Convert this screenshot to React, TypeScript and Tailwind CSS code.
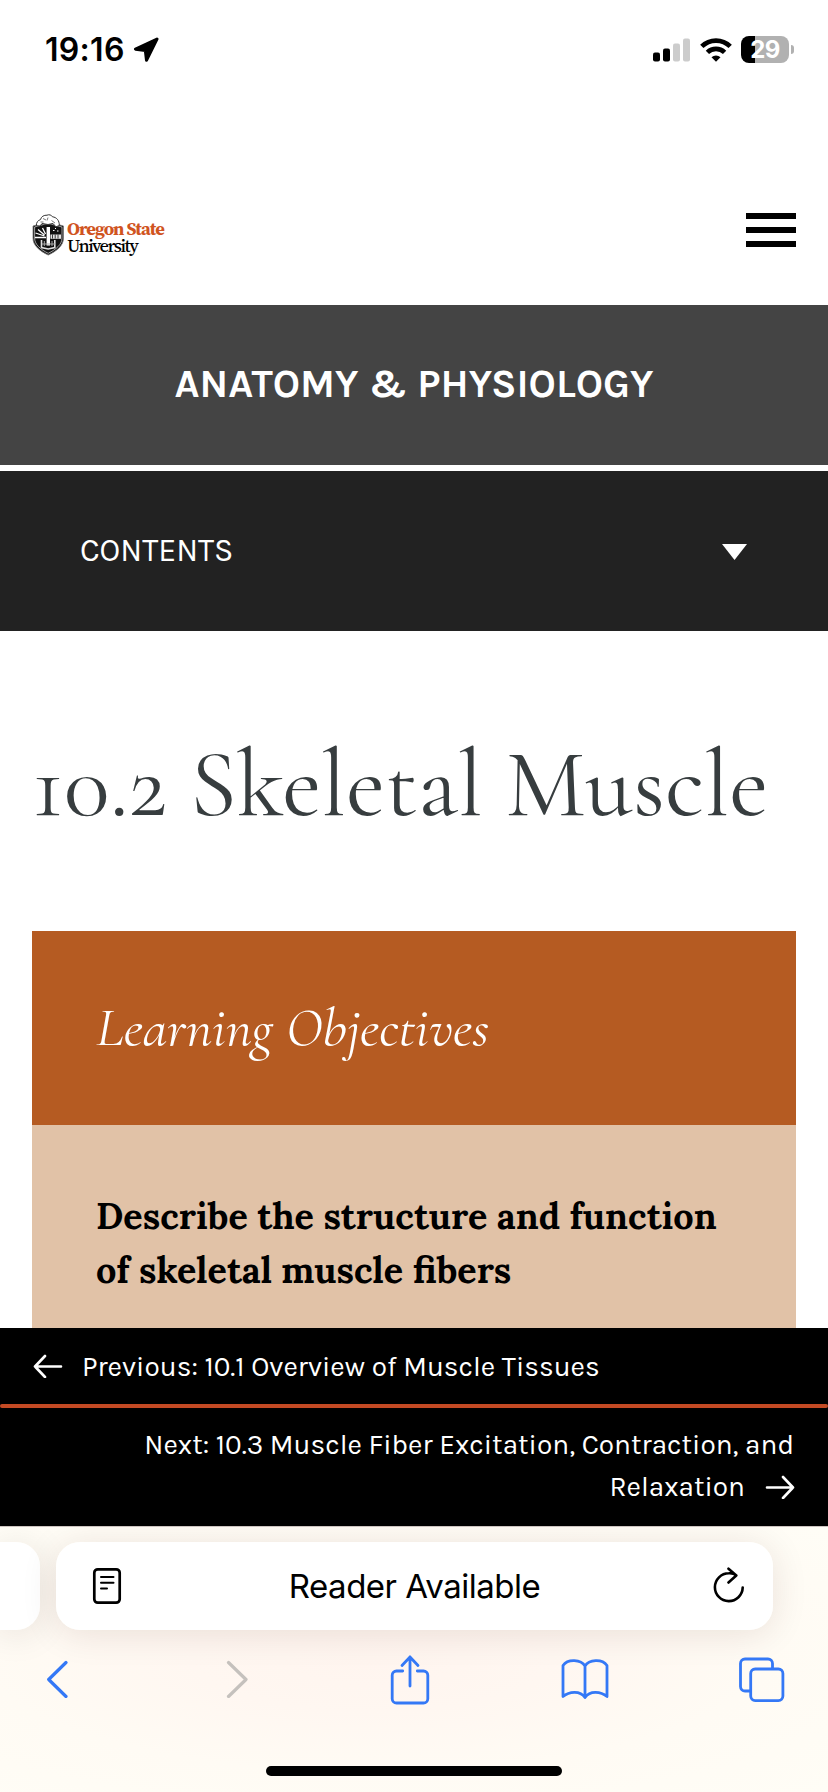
function StatusBar() {
  return (
    <div className="flex h-[99px] items-center justify-between pl-[45px] pr-[34px] font-['Inter',sans-serif]">
      <div className="flex items-center">
        <span className="text-[32px] font-semibold leading-none tracking-[0.3px]">19:16</span>
        <svg className="ml-[8px]" width="26" height="26" viewBox="0 0 26 26">
          <path d="M24 2 2.5 12.2 12.3 13.4 13.5 23.3Z" fill="#000" stroke="#000" strokeWidth="3" strokeLinejoin="round" />
        </svg>
      </div>
      <div className="flex items-center">
        <svg width="38" height="24" viewBox="0 0 38 24">
          <rect x="0" y="14.5" width="7" height="9" rx="2" fill="#000" />
          <rect x="10" y="10.5" width="7" height="13" rx="2" fill="#000" />
          <rect x="20" y="5.5" width="7" height="18" rx="2" fill="#ccc" />
          <rect x="30" y=".5" width="7" height="23" rx="2" fill="#ccc" />
        </svg>
        <svg className="ml-[9px]" width="32" height="24" viewBox="0 0 32 24">
          <path d="M1.8 8.4a20.2 20.2 0 0 1 28.4 0" fill="none" stroke="#000" strokeWidth="4.7" />
          <path d="M7.4 14.4a12.3 12.3 0 0 1 17.2 0" fill="none" stroke="#000" strokeWidth="4.7" />
          <path d="M11.5 19.3a6.6 6.6 0 0 1 9 0L16 23.8Z" fill="#000" />
        </svg>
        <div className="ml-[9px] flex h-[27px] w-[48px] items-center justify-center rounded-[8px] bg-[linear-gradient(to_right,#000_0,#000_14px,#b1b1b1_14px)] text-[24px] font-bold leading-none tracking-[-0.5px] text-white">
          29
        </div>
        <div className="ml-[2px] h-[9px] w-[3px] rounded-r-full bg-[#b1b1b1]" />
      </div>
    </div>
  );
}

function Crest() {
  return (
    <svg width="33" height="42" viewBox="0 0 33 42">
      <path d="M1 12 16 7.500 31.500 12V24C31.500 31.500 25 37 16.200 41 7.500 37 1 31.500 1 24Z" fill="#111" stroke="#777" strokeWidth=".8" />
      <path d="M2.600 13 16 9.200 30 13V24C30 30.500 24 35.500 16.200 39.300 8.600 35.500 2.600 30.500 2.600 24Z" fill="none" stroke="#ddd" strokeWidth=".7" />
      <path d="M3 23.500h11M3.500 19l9 3M6 15.500l6.500 5.500M10.500 14l3 6" stroke="#fff" strokeWidth="1.300" />
      <path d="M14.600 13h3.400v18.500h-3.400z" fill="#fff" />
      <path d="M18.500 20.500h10.500v4.300H18.500z" fill="#e5e5e5" />
      <path d="M20.500 20.500v4M23.200 20.500v4M26 20.500v4" stroke="#111" strokeWidth=".8" />
      <path d="M21 16.500h1.500M25 17h1.500M23 14.500h1" stroke="#fff" strokeWidth="1" />
      <path d="M9.500 26v7.500l6.700 1.500 6.600-1.500V26" fill="none" stroke="#ddd" strokeWidth="1.600" />
      <path d="M12.300 27v5M20 27v5M10 30h13" stroke="#aaa" strokeWidth="1" />
      <path d="M4.500 11.800C4 8.500 6 6.300 8.500 5.600 9.200 2.500 12 1 15 1.200 17 .200 19.500 1 20.500 2.800 24.500 3.200 27.500 6.500 27.300 11.500L24 12.800 21 9.500 16 10.500 10 9.500 8 12Z" fill="#fff" stroke="#333" strokeWidth="1" />
      <path d="M11 4.500 14 6M16 3.500 15 6.500M19.500 6.500 23 9M8.500 8h3" stroke="#555" strokeWidth=".8" />
    </svg>
  );
}

function SiteHeader() {
  return (
    <header className="flex h-[206px] items-start justify-between px-[32px] pt-[114px]">
      <a className="flex items-start pt-px">
        <Crest />
        <span className="ml-[2px] flex flex-col pt-[7px] font-['Source_Serif_4','Liberation_Serif',serif] text-[18.500px] leading-[16.500px]">
          <span className="font-bold tracking-[-1px] text-[#d0541f]">Oregon State</span>
          <span className="font-medium tracking-[-1.500px] text-black">University</span>
        </span>
      </a>
      <div className="flex w-[50px] flex-col gap-[8px]">
        <div className="h-[6px] bg-black" />
        <div className="h-[6px] bg-black" />
        <div className="h-[6px] bg-black" />
      </div>
    </header>
  );
}

function PageNav() {
  return (
    <nav className="h-[198px] bg-black font-['Karla','Inter',sans-serif] text-[28px] leading-[42px] text-white">
      <div className="flex h-[76px] items-center pl-[33px] pt-[2px]">
        <svg className="mb-[2px]" width="30" height="24" viewBox="0 0 30 24" fill="none" stroke="#fff" strokeWidth="2.600" strokeLinecap="round" strokeLinejoin="round">
          <path d="M28 12.500H2M12 2 2 12.500 12 23" />
        </svg>
        <span className="ml-[19px] whitespace-nowrap">Previous: 10.1 Overview of Muscle Tissues</span>
      </div>
      <div className="h-[4px] rounded-full bg-[#c44a24]" />
      <div className="flex flex-col items-end pr-[33px] pt-[16px]">
        <span className="whitespace-nowrap pr-px">Next: 10.3 Muscle Fiber Excitation, Contraction, and</span>
        <span className="flex items-center">
          Relaxation
          <svg className="ml-[20px]" width="30" height="24" viewBox="0 0 30 24" fill="none" stroke="#fff" strokeWidth="2.600" strokeLinecap="round" strokeLinejoin="round">
            <path d="M2 12.500h26M18 2l10 10.500L18 23" />
          </svg>
        </span>
      </div>
    </nav>
  );
}

function BrowserBar() {
  return (
    <footer className="h-[266px] overflow-hidden border-t border-[#cdc4c0] bg-[radial-gradient(ellipse_at_45%_50%,#fff5ef_0%,#fff7f1_28%,#fffbf4_60%,#fffdf6_100%)]">
      <div className="flex pt-[15px]">
        <div className="h-[88px] w-[40px] rounded-r-[24px] bg-white/95 shadow-[0_4px_36px_rgba(40,20,0,0.11)]" />
        <div className="ml-[16px] flex h-[88px] w-[717px] items-center justify-between rounded-[24px] bg-white/95 pl-[36px] pr-[28px] shadow-[0_4px_36px_rgba(60,20,0,0.11)]">
          <svg width="30" height="38" viewBox="0 0 30 38" fill="none" stroke="#000" strokeLinecap="round">
            <rect x="2.300" y="2.300" width="25.400" height="33.400" rx="3.500" strokeWidth="2.700" />
            <path d="M9 10h12.500M9 15.700h12.500M9 21.500h6" strokeWidth="2" />
          </svg>
          <span className="mr-[6px] font-['Inter',sans-serif] text-[33px] leading-none tracking-[-0.5px] text-black">Reader Available</span>
          <svg width="32" height="38" viewBox="0 0 32 38" fill="none" stroke="#000" strokeWidth="2.600" strokeLinecap="round" strokeLinejoin="round">
            <path d="M29.700 20.500A13.900 13.900 0 1 1 15.800 6.300C18.500 6.100 21 6.600 23.200 8.200M15.500 1.700 23.300 8.500 15.500 15.500" />
          </svg>
        </div>
      </div>
      <div className="mt-[24px] flex h-[50px] items-center pl-[45px] text-[#3478f6]">
        <svg width="25" height="38" viewBox="0 0 25 38" fill="none" stroke="currentColor" strokeWidth="3.200" strokeLinecap="round" strokeLinejoin="round">
          <path d="M21 2.500 3.700 19.500 21 36.500" />
        </svg>
        <svg className="ml-[155px] text-[#c5c1bd]" width="25" height="38" viewBox="0 0 25 38" fill="none" stroke="currentColor" strokeWidth="3.200" strokeLinecap="round" strokeLinejoin="round">
          <path d="M3.500 2.500 21 19.500 3.500 36.500" />
        </svg>
        <svg className="ml-[140px]" width="40" height="51" viewBox="0 0 40 51" fill="none" stroke="currentColor" strokeWidth="2.800" strokeLinecap="round" strokeLinejoin="round">
          <path d="M12.700 17H6.500a4.300 4.300 0 0 0-4.300 4.300v23.400A4.300 4.300 0 0 0 6.500 49h27a4.300 4.300 0 0 0 4.300-4.300V21.300A4.300 4.300 0 0 0 33.500 17h-6.200M20 32V3M12 11.500 20 3l8 8.500" />
        </svg>
        <svg className="ml-[130px]" width="50" height="44" viewBox="0 0 50 44" fill="none" stroke="currentColor" strokeWidth="2.800" strokeLinecap="round" strokeLinejoin="round">
          <path d="M25 9C21 2.500 8 1.500 3 8.500V39.500C9 34.500 20 33 25 40.500 30 33 41 34.500 47 39.500V8.500C42 1.500 29 2.500 25 9ZM25 9V40.500" />
        </svg>
        <svg className="ml-[128px]" width="47" height="47" viewBox="0 0 47 47" fill="none" stroke="currentColor" strokeWidth="2.800" strokeLinejoin="round">
          <rect x="12.700" y="13" width="32.200" height="31.600" rx="4.500" />
          <path d="M12.700 35H7A4.500 4.500 0 0 1 2.500 30.500V7.500A4.500 4.500 0 0 1 7 3H30A4.500 4.500 0 0 1 34.500 7.500V13" />
        </svg>
      </div>
      <div className="mx-auto mt-[62px] h-[10px] w-[296px] rounded-full bg-black" />
    </footer>
  );
}

export default function App() {
  return (
    <div className="flex h-[1792px] w-[828px] flex-col overflow-hidden bg-white text-black">
      <StatusBar />
      <SiteHeader />
      <div className="flex h-[160px] items-center justify-center bg-[#444] pb-[2px] font-['Karla','Inter',sans-serif] text-[40px] font-bold leading-none text-white">
        ANATOMY &amp; PHYSIOLOGY
      </div>
      <div className="mt-[6px] flex h-[160px] items-center justify-between bg-[#222] pl-[80px] pr-[81px] font-['Karla','Inter',sans-serif] text-[32px] leading-none text-white">
        CONTENTS
        <svg className="mt-[2px]" width="25" height="16" viewBox="0 0 25 16">
          <path d="M0 0h25L12.500 16Z" fill="#fff" />
        </svg>
      </div>
      <main className="h-[697px] overflow-hidden px-[32px] pt-[96px]">
        <h1 className="whitespace-nowrap font-['Cormorant_Garamond','Liberation_Serif',serif] text-[96px] leading-[116px] text-[#373d3f]">10.2 Skeletal Muscle</h1>
        <section className="mt-[88px]">
          <h2 className="flex h-[194px] items-center bg-[#b55b22] pl-[64px] font-['Cormorant_Garamond','Liberation_Serif',serif] text-[56px] italic leading-none text-white">
            Learning Objectives
          </h2>
          <div className="h-[203px] bg-[#e1c2a7] px-[64px] pt-[64px] font-['Lora','Liberation_Serif',serif] text-[36px] font-bold leading-[54px]">
            Describe the structure and function of skeletal muscle fibers
          </div>
        </section>
      </main>
      <PageNav />
      <BrowserBar />
    </div>
  );
}
